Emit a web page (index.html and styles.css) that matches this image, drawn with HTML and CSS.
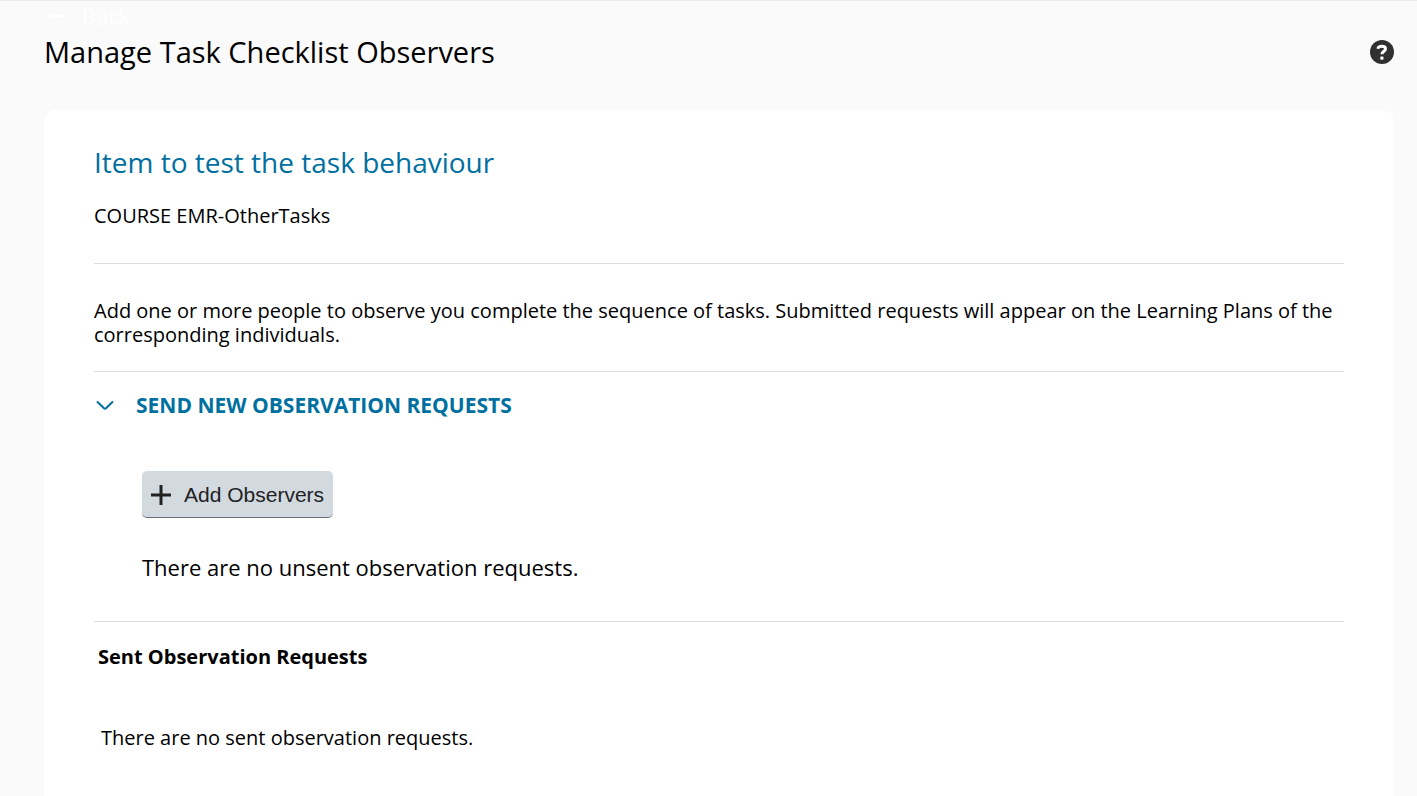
FILE: index.html
```html
<!DOCTYPE html>
<html lang="en">
<head>
  <meta charset="UTF-8">
  <meta name="viewport" content="width=device-width, initial-scale=1">
  <title>Manage Task Checklist Observers</title>
  <link rel="stylesheet" href="styles.css">
</head>
<body>
  <header class="page-header">
    <a class="back-link" href="#">
      <svg class="back-icon" viewBox="0 0 24 12" aria-hidden="true">
        <path class="shaft" d="M23 6H4" />
        <path class="head" d="M1 6l6-4v8z" />
      </svg>
      Back
    </a>
    <div class="title-row">
      <h1>Manage Task Checklist Observers</h1>
      <button class="help-btn" type="button" aria-label="Help">
        <svg viewBox="0 0 24 24" aria-hidden="true">
          <circle cx="12" cy="12" r="12" />
          <path d="M7.800 8.800C8.200 6.900 9.700 6.200 11.800 6.200c2.300 0 3.700 1 3.700 2.700 0 2.400-3.600 2.400-3.600 5.400" />
          <rect x="10.300" y="16.600" width="3.200" height="3.200" rx="1" />
        </svg>
      </button>
    </div>
  </header>

  <main class="card">
    <section class="item-info">
      <h2>Item to test the task behaviour</h2>
      <p>COURSE EMR-OtherTasks</p>
    </section>

    <p class="instructions">Add one or more people to observe you complete the sequence of tasks. Submitted requests will appear on the Learning Plans of the corresponding individuals.</p>

    <section class="new-requests">
      <button class="section-toggle" id="section-toggle" type="button" aria-expanded="true" aria-controls="new-requests-body">
        <svg class="chevron" viewBox="0 0 18 18" aria-hidden="true">
          <path d="M1 5.500l7 6.800q1 .9 2 0l7-6.800" />
        </svg>
        SEND NEW OBSERVATION REQUESTS
      </button>
      <div class="new-requests-body" id="new-requests-body">
        <button class="add-btn" type="button">
          <svg class="plus" viewBox="0 0 22 22" aria-hidden="true">
            <path d="M11 1v20M1 11h20" />
          </svg>
          Add Observers
        </button>
        <p>There are no unsent observation requests.</p>
      </div>
    </section>

    <section class="sent-requests">
      <h3>Sent Observation Requests</h3>
      <p>There are no sent observation requests.</p>
    </section>
  </main>

  <script>
    const toggle = document.getElementById("section-toggle");
    const requestsBody = document.getElementById("new-requests-body");

    toggle.addEventListener("click", function () {
      const open = toggle.getAttribute("aria-expanded") === "true";
      toggle.setAttribute("aria-expanded", String(!open));
      requestsBody.hidden = open;
    });
  </script>
</body>
</html>
```
FILE: styles.css
```css
:root {
  --page-bg: #fafafa;
  --link-color: #0070a0;
  --line-color: #dddddd;
  --button-bg: #d2d9df;
}

* {
  margin: 0;
  padding: 0;
  box-sizing: border-box;
}

body {
  display: flex;
  flex-direction: column;
  min-height: 100vh;
  font-family: "Open Sans", "Noto Sans", sans-serif;
  font-size: 20px;
  line-height: 24px;
  color: #000;
  background: var(--page-bg);
  border-top: 1px solid #eaecec;
}

button {
  border: none;
  background: none;
  cursor: pointer;
}

h1,
h2 {
  font-weight: 400;
  line-height: 40px;
}

h1 {
  font-size: 29px;
}

h2 {
  font-size: 28px;
}

.page-header {
  padding: 0 23px 0 44px;
}

.back-link {
  display: flex;
  align-items: center;
  gap: 14px;
  width: fit-content;
  font-size: 22px;
  line-height: 30px;
  color: #fff;
  text-decoration: none;
}

.back-icon {
  width: 24px;
  height: 12px;
}

.back-icon .shaft {
  stroke: #fff;
  stroke-width: 2;
}

.back-icon .head {
  fill: #fff;
}

.title-row {
  display: flex;
  align-items: center;
  justify-content: space-between;
  margin-top: 1px;
}

.help-btn,
.help-btn svg {
  display: block;
  width: 24px;
  height: 24px;
}

.help-btn circle {
  fill: #303030;
}

.help-btn path {
  fill: none;
  stroke: #fff;
  stroke-width: 3;
}

.help-btn rect {
  fill: #fff;
}

.card {
  flex: 1;
  margin: 38px 23px 0 44px;
  padding: 32px 50px 44px;
  background: #fff;
  border-radius: 12px 12px 0 0;
}

.item-info {
  padding-bottom: 35px;
  border-bottom: 1px solid var(--line-color);
}

.item-info h2 {
  margin-bottom: 22px;
  color: var(--link-color);
}

.instructions {
  padding: 35px 0 24px;
  border-bottom: 1px solid var(--line-color);
}

.new-requests {
  padding: 21px 0 38px;
  border-bottom: 1px solid var(--line-color);
}

.section-toggle {
  display: flex;
  align-items: center;
  gap: 22px;
  padding-left: 2px;
  font: inherit;
  font-size: 21px;
  font-weight: 700;
  color: var(--link-color);
}

.chevron {
  width: 18px;
  height: 18px;
  fill: none;
  stroke: currentColor;
  stroke-width: 2;
}

.new-requests-body {
  padding: 54px 0 0 48px;
}

.new-requests-body p {
  margin-top: 33px;
  font-size: 22px;
  line-height: 32px;
}

.add-btn {
  display: flex;
  align-items: center;
  gap: 12px;
  height: 47px;
  padding: 1px 9px 0 8px;
  font-family: "Liberation Sans", Arial, sans-serif;
  font-size: 21px;
  color: #222;
  background: var(--button-bg);
  border-bottom: 1px solid #6a7178;
  border-radius: 5px;
}

.plus {
  width: 22px;
  height: 22px;
  fill: none;
  stroke: currentColor;
  stroke-width: 3;
}

.sent-requests {
  padding: 23px 4px 0;
}

.sent-requests h3 {
  margin-bottom: 57px;
  font-size: 20px;
}

.sent-requests p {
  padding-left: 3px;
}
```
